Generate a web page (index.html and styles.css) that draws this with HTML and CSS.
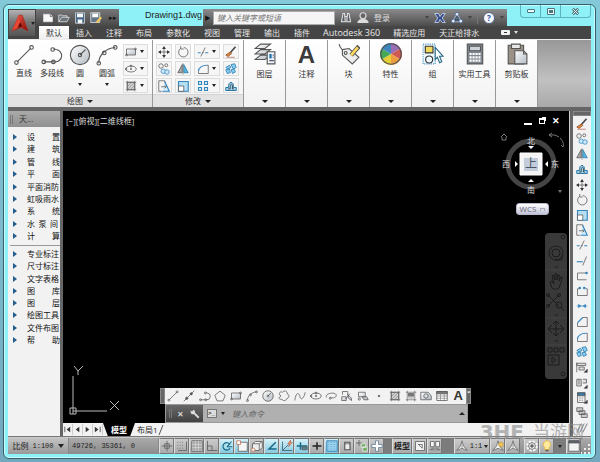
FILE: index.html
```html
<!DOCTYPE html>
<html lang="zh-CN">
<head>
<meta charset="utf-8">
<meta name="viewport" content="width=device-width, initial-scale=1">
<title>Drawing1.dwg</title>
<link rel="stylesheet" href="styles.css">
</head>
<body>
<svg class="sprite" aria-hidden="true">
  <defs>
    <linearGradient id="steel" x1="0" y1="0" x2="1" y2="1"><stop offset="0" stop-color="#fff"/><stop offset="1" stop-color="#b4bcc4"/></linearGradient>
    <linearGradient id="red" x1="0" y1="0" x2="1" y2="1"><stop offset="0" stop-color="#f0604a"/><stop offset="1" stop-color="#8e0b05"/></linearGradient>
  </defs>
  <symbol id="line" viewBox="0 0 16 16"><path d="M3 13 13 3"/><circle cx="2.5" cy="13.500" r="1.300"/><circle cx="13.500" cy="2.500" r="1.300"/></symbol>
  <symbol id="xline" viewBox="0 0 16 16"><path d="M1 15 15 1"/><g fill="#444"><circle cx="5" cy="11" r="1.500"/><circle cx="11" cy="5" r="1.500"/></g></symbol>
  <symbol id="pline" viewBox="0 0 16 16"><path d="M2 13h8a4 4 0 0 0 1-9l-2-.5"/><circle cx="2" cy="13" r="1.300"/><circle cx="9" cy="13" r="1.300"/><circle cx="8.500" cy="4" r="1.300"/></symbol>
  <symbol id="polygon" viewBox="0 0 16 16"><path d="M8 1.500 15 7l-3 7.500H4L1 7z"/></symbol>
  <symbol id="rect" viewBox="0 0 16 16"><path d="M2 4h12v8H2z" fill="url(#steel)"/><circle cx="2" cy="12" r="1.200"/><circle cx="14" cy="4" r="1.200"/></symbol>
  <symbol id="arc" viewBox="0 0 16 16"><path d="M2 14C2 8 7 3 14 2.500"/><circle cx="2" cy="14" r="1.300"/><circle cx="6" cy="6.500" r="1.300"/><circle cx="14" cy="2.500" r="1.300"/></symbol>
  <symbol id="circle" viewBox="0 0 16 16"><circle cx="8" cy="8" r="7" fill="url(#steel)"/><path d="m8 8 4-4"/><circle cx="8" cy="8" r="1.200"/></symbol>
  <symbol id="cloud" viewBox="0 0 16 16"><path d="M4 8C0 6 2 1 6 3c2-3 7-2 6 2 4 1 3 6 0 6-1 4-6 4-7 1-4 2-5-3-1-4z"/></symbol>
  <symbol id="spline" viewBox="0 0 16 16"><path d="M1 14C3 1 7 4 8 9s5 3 7-6"/></symbol>
  <symbol id="ellipse" viewBox="0 0 16 16"><ellipse cx="8" cy="8" rx="7" ry="4"/><circle cx="8" cy="8" r="1"/><circle cx="8" cy="4" r="1.200"/><circle cx="1.500" cy="8" r="1"/></symbol>
  <symbol id="earc" viewBox="0 0 16 16"><path d="M2 10C-1 4 15 2 15 7c0 4-6 4-8 3"/><circle cx="7" cy="11" r="1.300"/></symbol>
  <symbol id="block" viewBox="0 0 16 16"><path d="M2 6V2h7v5" /><path d="M1 9h6v5H1zM9 6l5 5v3l-4-3z" fill="url(#steel)"/><path d="m6 12 6-7"/></symbol>
  <symbol id="make" viewBox="0 0 16 16"><path d="M2 3h9v6H2zM7 9h6l2 4H9z" fill="url(#steel)"/><circle cx="3" cy="12" r="1.500"/></symbol>
  <symbol id="point" viewBox="0 0 16 16"><circle cx="8" cy="8" r="1" fill="#333"/></symbol>
  <symbol id="hatch" viewBox="0 0 16 16"><path d="M3 3h10v10H3z" fill="#cfcfcf"/><path d="M3 1v14M13 1v14M1 3h14M1 13h14" stroke-width=".8"/><path d="m4 8 4-4M4 12l8-8m-4 8 4-4" stroke-width=".5"/></symbol>
  <symbol id="gradient" viewBox="0 0 16 16"><path d="M3 1v14M13 1v14M1 3h14M1 13h14" stroke-width=".8"/><path d="M4 4h8v5H4z" fill="#777" stroke="none"/><path d="M4 9h8v3H4z" fill="#ccc" stroke="none"/></symbol>
  <symbol id="region" viewBox="0 0 16 16"><path d="M1 3h10l4 5v5H1z" fill="url(#steel)"/><circle cx="8" cy="8" r="3"/></symbol>
  <symbol id="table" viewBox="0 0 16 16"><path d="M1 2h14v12H1z" fill="#f8f8f8"/><path d="M1 8h14M1 11h14M6 5v9m5-9v9" stroke-width=".6"/><path d="M1 2h14v3H1z" fill="#777"/></symbol>
  <symbol id="move" viewBox="0 0 16 16"><path d="M8 2v12M2 8h12"/><path d="m8 0 2.500 4h-5zM8 16l2.500-4h-5zM0 8l4-2.500v5zM16 8l-4-2.500v5z" fill="#333" stroke="none"/></symbol>
  <symbol id="rotate" viewBox="0 0 16 16"><path d="M5 3a6.300 6.300 0 1 0 4-1M5 0v4h4"/></symbol>
  <symbol id="trim" viewBox="0 0 16 16"><path d="M1 9h4m6 0h4" stroke="#3484bd" stroke-width="1.500"/><path d="M7 9h2M5 14l6-12"/></symbol>
  <symbol id="extend" viewBox="0 0 16 16"><path d="M1 9h8" stroke="#3484bd" stroke-width="1.500"/><path d="m9 14 5-12"/></symbol>
  <symbol id="brush" viewBox="0 0 16 16"><path d="M14 1 7 9" stroke="#444" stroke-width="2"/><path d="M7 8 1 12l3 2 5-4z" fill="#d8853d" stroke="#94502a"/><path d="M2 15h11" stroke="#b76a58"/></symbol>
  <symbol id="copy" viewBox="0 0 16 16"><circle cx="4" cy="4" r="3"/><circle cx="11" cy="3" r="2"/><g stroke="#3187bd" fill="#cfeafa"><circle cx="7" cy="11" r="3"/><circle cx="12" cy="12" r="3"/></g></symbol>
  <symbol id="mirror" viewBox="0 0 16 16"><path d="M7 2v11H1z" fill="#aaa"/><path d="M9 2v11h6z" fill="#55b5e7" stroke="#2878a8"/><path d="M8 0v16" stroke-width=".6"/></symbol>
  <symbol id="fillet" viewBox="0 0 16 16"><path d="M13 3h2v11H2v-3" /><path d="M2 11C2 6 7 3 13 3" stroke="#3484bd" stroke-width="1.500"/></symbol>
  <symbol id="chamfer" viewBox="0 0 16 16"><path d="M9 2h6v12H2V9"/><path d="m2 9 7-7" stroke="#3484bd" stroke-width="1.500"/></symbol>
  <symbol id="explode" viewBox="0 0 16 16"><path d="m1 6 5-3 2 3-4 2zM8 2l5-1 2 5-4 2zM1 9l5-1 1 5-4 1zM8 9l4-1 2 4-4 2z" fill="#86cff2" stroke="#2576a9"/></symbol>
  <symbol id="stretch" viewBox="0 0 16 16"><path d="M9 5V1H1v14h4"/><path d="m9 2 6 13H6" stroke="#3484bd" stroke-width="1.500" fill="#d2edfb"/><path d="M4 9h7M9 7l2 2-2 2"/></symbol>
  <symbol id="scale" viewBox="0 0 16 16"><path d="M2 2h13v13H2z" fill="#b4def2" stroke="#3484bd" stroke-width="1.500"/><path d="M2 8h7v7H2z" fill="#fff"/></symbol>
  <symbol id="array" viewBox="0 0 16 16"><g fill="#d9effa" stroke="#3187bd" stroke-width="1.500"><path d="M2 2h4v4H2zM10 2h4v4h-4zM2 10h4v4H2zM10 10h4v4h-4z"/></g></symbol>
  <symbol id="offset" viewBox="0 0 16 16"><path d="M1 14v-4h4C3 1 13 1 11 10h4v4z" fill="#9fd2ec" stroke="#2876a2" stroke-width="1.300"/><path d="M4 12h3V8c0-3 3-3 3 0v4h2" stroke="#333"/></symbol>
  <symbol id="break1" viewBox="0 0 16 16"><path d="M13 4H2v9h12"/><circle cx="14" cy="4" r="1.800" fill="#3484bd" stroke="none"/></symbol>
  <symbol id="break2" viewBox="0 0 16 16"><path d="M4 5H2v9h13V5h-2"/><g fill="#3484bd" stroke="none"><circle cx="5" cy="4" r="1.800"/><circle cx="11" cy="4" r="1.800"/></g></symbol>
  <symbol id="join" viewBox="0 0 16 16"><path d="M1 8h14" stroke="#3484bd"/><path d="m3 5 4 3-4 3zM13 5 9 8l4 3z" fill="#3484bd" stroke="none"/></symbol>
  <symbol id="order" viewBox="0 0 16 16"><path d="M1 2v13M1 3h12v3H1zM4 8h7v4H4z" fill="#ddd"/><path d="M15 11v4h-4z" fill="#222"/></symbol>
  <symbol id="align" viewBox="0 0 16 16"><path d="M1 3h6v9H1zM9 3h5v5H9M4 3v7" fill="#ddd"/><path d="M15 11v4h-4z" fill="#222"/></symbol>
  <symbol id="calcblue" viewBox="0 0 16 16"><path d="M2 1h10v13H2z" fill="#eee"/><path d="M2 1h10v4H2z" fill="#3c78a5"/><path d="M4 8h6M4 11h6" stroke-dasharray="1 1"/><path d="M15 11v4h-4z" fill="#222"/></symbol>
  <symbol id="stack" viewBox="0 0 16 16"><path d="M1 1h8v5H1zM4 5h8v5H4zM7 9h8v5H7z" fill="#ccc"/></symbol>
  <symbol id="slashes" viewBox="0 0 16 16"><path d="m1 14 6-12M5 14l6-12M9 14l6-12"/></symbol>
  <symbol id="a-logo" viewBox="0 0 16 16"><path d="M1 15 7 1h3l5 14-6-3z" fill="url(#red)" stroke="#a81d10" stroke-width=".5"/><path d="m8 7 2 4-4 1z" fill="#5e0804" stroke="none"/><path d="m1 15 6-14 1 6-2 5z" fill="#e64835" stroke="none"/></symbol>
  <symbol id="new" viewBox="0 0 16 16"><path d="M2 3h9l3 3v7H2z" fill="#f8f8f8" stroke="#ddd"/><path d="M11 3v3h3"/></symbol>
  <symbol id="open" viewBox="0 0 16 16"><path d="M1 13V4h4l1 1h6v3M1 13l4-6h10l-3 6z" fill="#6c747c" stroke="#e6e6e6"/></symbol>
  <symbol id="save" viewBox="0 0 16 16"><path d="M2 1h12v14H2z" fill="#46698c" stroke="#ddd"/><path d="M4 2h8v5H4zM5 10h6v5H5z" fill="#f8f8f8" stroke="none"/></symbol>
  <symbol id="saveas" viewBox="0 0 16 16"><path d="M1 1h12v13H1z" fill="#65788a" stroke="#eee"/><path d="M3 2h8v5H3z" fill="#fff" stroke="none"/><path d="m15 7-6 7" stroke="#f0c65d" stroke-width="3"/></symbol>
  <symbol id="binocular" viewBox="0 0 16 16"><path d="M4 2h2l1 11H2zM10 2h2l2 11H9zM6 6h4" fill="#555d66" stroke="#e4e4e4" stroke-width="1.400"/></symbol>
  <symbol id="user" viewBox="0 0 16 16"><circle cx="8" cy="5" r="4" fill="#666" stroke="#ddd" stroke-width="1.500"/><path d="M1 14c1-4 4-4 7-4s6 0 7 4z" fill="#ddd" stroke="#eee"/></symbol>
  <symbol id="exchange" viewBox="0 0 16 16"><path d="M1 2h5l2 4 3-4h4l-4 6 4 6h-4l-3-4-2 4H1l4-6z" fill="#354f8c" stroke="#dde6ff"/></symbol>
  <symbol id="a360" viewBox="0 0 16 16"><path d="m8 2-6 11h12zM8 8v1" fill="#456" stroke="#ccd8f0"/><g fill="#e3eaff" stroke="#48608f"><circle cx="8" cy="3" r="2.500"/><circle cx="3" cy="12" r="2.500"/><circle cx="13" cy="12" r="2.500"/></g></symbol>
  <symbol id="layers" viewBox="0 0 20 20"><path d="M6 1h9l-5 4H1zM6 6h9l-5 4H1zM6 11h9l-5 4H1z" fill="url(#steel)"/><path d="M12 8h7v11h-7z" fill="#eef4fa"/><path d="M14 10h2v4h-2z" fill="#166ba8" stroke="none"/><path d="M17 11h1m-1 2h1m-4 3h4" stroke="#557"/></symbol>
  <symbol id="tag" viewBox="0 0 20 20"><path d="M1 1c1 4 4 7 6 6" /><path d="m4 6 6-1 9 8-6 6-9-8z" fill="#eceeee"/><circle cx="7" cy="9" r="1.300"/><path d="m19 3-7 8" stroke="#555" stroke-width="4"/><path d="m18 4-6 7" stroke="#ffd85b" stroke-width="2.500"/></symbol>
  <symbol id="wheel" viewBox="0 0 20 20"><g stroke="none"><path d="M10 10V0a10 10 0 0 1 8.700 5z" fill="#9a6eb5"/><path d="m10 10 8.700-5a10 10 0 0 1 0 10z" fill="#cf5a51"/><path d="m10 10 8.700 5A10 10 0 0 1 10 20z" fill="#ee9c40"/><path d="M10 10v10a10 10 0 0 1-8.700-5z" fill="#e6cd37"/><path d="m10 10-8.700 5a10 10 0 0 1 0-10z" fill="#45a957"/><path d="M10 10 1.300 5A10 10 0 0 1 10 0z" fill="#3e87bd"/></g><circle cx="10" cy="10" r="9.300" stroke="#555"/></symbol>
  <symbol id="group" viewBox="0 0 20 20"><path d="M1 1h11v18H1z" fill="#eff8fc" stroke="#4892c3" stroke-dasharray="1 1"/><path d="M3 3h7v6H3z" fill="#f3d95c" stroke="#333"/><circle cx="6.500" cy="15" r="3.200" stroke="#333"/><path d="m12 4 7 8h-3l2 5-2 1-2-5-2 2z" fill="#fff" stroke="#276787"/></symbol>
  <symbol id="calc" viewBox="0 0 20 20"><path d="M3 1h14v18H3z" fill="#7f8790"/><path d="M5 3h10v4H5z" fill="#cdd4d9"/><path d="M5 10h10M5 13h10M5 16h10" stroke="#fff" stroke-width="2" stroke-dasharray="2 .7"/></symbol>
  <symbol id="paste" viewBox="0 0 20 20"><path d="M2 2h14v17H2z" fill="#9b9187"/><path d="M5 1h8v4H5z" fill="#e9e9e9"/><path d="M8 7h8l3 3v9H8z" fill="url(#steel)"/><path d="M16 7v3h3"/></symbol>
  <symbol id="snap" viewBox="0 0 16 16"><path d="M8 1v14M1 8h14M5 5h6v6H5z"/></symbol>
  <symbol id="dots" viewBox="0 0 16 16"><path d="M2 3h9M2 7h9M2 11h9" stroke-dasharray="1 2"/><path d="M14 2v12H3"/></symbol>
  <symbol id="grid" viewBox="0 0 16 16"><path d="M1 1h14v14H1z" fill="#e4e4e4"/><path d="M4 1v14M8 1v14m4-14v14M1 4h14M1 8h14M1 12h14" stroke-width=".6"/></symbol>
  <symbol id="ortho" viewBox="0 0 16 16"><path d="M2 1v13h13M2 8h6v6"/></symbol>
  <symbol id="polar" viewBox="0 0 16 16"><path d="M12 6a5 5 0 1 0 0 5" stroke="#126783" stroke-width="1.500"/><path d="M8 9h7m-7 0 6-7" stroke="#126783" stroke-width="1.500"/></symbol>
  <symbol id="osnap" viewBox="0 0 16 16"><path d="M3 3h12v12H3z" fill="#f5f5f5"/><path d="M1 1h5v5H1z" fill="#fff" stroke="#c56b47"/></symbol>
  <symbol id="osnap3" viewBox="0 0 16 16"><path d="m2 5 4-3h9v8l-4 4H2zM2 5h9v9m0-9 4-3" fill="#eee"/><circle cx="3" cy="13" r="2.200" fill="#fff" stroke="#c56b47"/></symbol>
  <symbol id="angle" viewBox="0 0 16 16"><path d="M13 3 4 12h10" stroke="#176b88" stroke-width="2"/></symbol>
  <symbol id="ducs" viewBox="0 0 16 16"><path d="M2 2v12h13M2 14l8-8" stroke="#32556b"/><path d="m13 0-4 5h3l-2 4 5-6h-3z" fill="#f5a92f" stroke="#b66"/></symbol>
  <symbol id="dyn" viewBox="0 0 16 16"><path d="M6 3v10M1 8h14" stroke="#176b88" stroke-width="2"/><path d="M8 9h7v4H8z" fill="#5c8291"/></symbol>
  <symbol id="weight" viewBox="0 0 16 16"><path d="M2 8h12M8 3v10" stroke="#222" stroke-width="2"/></symbol>
  <symbol id="trans" viewBox="0 0 16 16"><path d="M1 1h14v14H1z" fill="#9dd5f0" stroke="#216fa7"/><path d="M1 3h14M1 6h14M1 9h14M1 12h14" stroke="#4f9ac6" stroke-dasharray="1 1"/></symbol>
  <symbol id="quick" viewBox="0 0 16 16"><path d="M5 3h7v10H5z" fill="#eee" stroke-width="1.500"/><path d="M5 5h7"/></symbol>
  <symbol id="cycle" viewBox="0 0 16 16"><path d="M4 0v8M0 4h8"/><path d="M7 5h6v5H7zM9 9h6v6H9z" fill="#74ad64" stroke="#eee"/></symbol>
  <symbol id="plus" viewBox="0 0 16 16"><path d="M6 1h4v5h5v4h-5v5H6v-5H1V6h5z" fill="#fff" stroke="#597993"/></symbol>
  <symbol id="sheet" viewBox="0 0 16 16"><path d="M2 2h12v12H2z" fill="#f2f2f2"/><path d="m5 5 6 6V6H6"/></symbol>
  <symbol id="views" viewBox="0 0 16 16"><path d="M2 2h5v7H2zM9 2h5v7H9zM1 13h14M4 13v-2h8v2" fill="#f8f8f8"/></symbol>
  <symbol id="scaleA" viewBox="0 0 16 16"><path d="m8 1 2 7 5 6-7-3-7 3 5-6z" fill="#f2f2f2" stroke="#666"/><path d="M8 2v9" stroke="#888"/></symbol>
  <symbol id="scaleAy" viewBox="0 0 16 16"><path d="m8 1 2 7 5 6-7-3-7 3 5-6z" fill="#f2f2f2" stroke="#666"/><circle cx="12" cy="6" r="3" fill="#f4c75c" stroke="#c89b3c"/></symbol>
  <symbol id="gear" viewBox="0 0 16 16"><circle cx="8" cy="8" r="6" stroke="#fff" stroke-width="3" stroke-dasharray="3 1.700"/><circle cx="8" cy="8" r="4.500" fill="#eee"/><circle cx="8" cy="8" r="1.800" fill="#777"/></symbol>
  <symbol id="bulb" viewBox="0 0 16 16"><path d="M5 10c-4-4-1-9 3-9s7 5 3 9v3H5z" fill="#ffe99b" stroke="#e7ad37"/><path d="M6 14h4" stroke-width="2"/></symbol>
  <symbol id="screen" viewBox="0 0 16 16"><path d="M1 1h14v14H1z" fill="#f4f4f4"/><path d="M1 1h14v3H1z" fill="#5d6674"/></symbol>
  <symbol id="wrench" viewBox="0 0 16 16"><path d="M14 14 5 5" stroke="#ddd" stroke-width="3"/><path d="M6 1 3 4 1 2c-1 6 3 8 6 5 2-2 1-5-1-6z" fill="#ddd" stroke="none"/></symbol>
</svg>

<div class="window">
  <header class="titlebar">
    <button class="appbtn" aria-label="应用程序菜单"><svg class="logo"><use href="#a-logo"/></svg><span class="tri"></span></button>
    <div class="quick">
      <button aria-label="新建"><svg><use href="#new"/></svg></button><button aria-label="打开"><svg><use href="#open"/></svg></button><button aria-label="保存"><svg><use href="#save"/></svg></button><button aria-label="另存为"><svg><use href="#saveas"/></svg></button><button class="more">▸▸</button>
    </div>
    <div class="doc">Drawing1.dwg</div>
    <div class="info">
      <span class="next">▶</span>
      <input class="search" aria-label="搜索" placeholder="键入关键字或短语">
      <svg><use href="#binocular"/></svg>
      <svg><use href="#user"/></svg>
      <button class="login">登录</button>
      <span class="grow"></span>
      <span class="tri dim"></span><svg><use href="#exchange"/></svg><svg><use href="#a360"/></svg><span class="tri dim"></span><span class="rule"></span><button class="help">?</button><span class="tri dim"></span>
    </div>
    <div class="winctl"><button aria-label="最小化"><i class="wmin"></i></button><button aria-label="还原"><i class="wmax"></i></button><button class="wclose" aria-label="关闭"><svg viewBox="0 0 10 10"><path d="m2 2 6 6M8 2 2 8" stroke="#51727b" stroke-width="3"/><path d="m2 2 6 6M8 2 2 8" stroke="#e8ffff"/></svg></button></div>
  </header>
  <nav class="tabs">
    <a href="#" class="on">默认</a><a href="#">插入</a><a href="#">注释</a><a href="#">布局</a><a href="#">参数化</a><a href="#">视图</a><a href="#">管理</a><a href="#">输出</a><a href="#">插件</a><a href="#" class="latin">Autodesk 360</a><a href="#">精选应用</a><a href="#">天正给排水</a>
    <button class="ribmin" aria-label="最小化功能区"><i></i></button><span class="tri light"></span>
  </nav>

  <section class="ribbon">
    <div class="panel draw">
      <div class="tools">
        <button class="big"><svg><use href="#line"/></svg>直线</button>
        <button class="big"><svg><use href="#pline"/></svg>多段线</button>
        <button class="big"><svg><use href="#circle"/></svg>圆<i class="tri"></i></button>
        <button class="big"><svg><use href="#arc"/></svg>圆弧<i class="tri"></i></button>
        <div class="smalls one">
          <button class="split" aria-label="矩形"><svg><use href="#rect"/></svg><i class="tri"></i></button>
          <button class="split" aria-label="椭圆"><svg><use href="#ellipse"/></svg><i class="tri"></i></button>
          <button class="split" aria-label="图案填充"><svg><use href="#hatch"/></svg><i class="tri"></i></button>
        </div>
      </div>
      <div class="ptitle">绘图 <i class="tri"></i></div>
    </div>
    <div class="panel modify">
      <div class="tools">
        <div class="smalls four">
          <button aria-label="移动"><svg><use href="#move"/></svg></button><button aria-label="旋转"><svg><use href="#rotate"/></svg></button><button class="split" aria-label="修剪"><svg><use href="#trim"/></svg><i class="tri"></i></button><button aria-label="删除"><svg><use href="#brush"/></svg></button>
          <button aria-label="复制"><svg><use href="#copy"/></svg></button><button aria-label="镜像"><svg><use href="#mirror"/></svg></button><button class="split" aria-label="圆角"><svg><use href="#fillet"/></svg><i class="tri"></i></button><button aria-label="分解"><svg><use href="#explode"/></svg></button>
          <button aria-label="拉伸"><svg><use href="#stretch"/></svg></button><button aria-label="缩放"><svg><use href="#scale"/></svg></button><button class="split" aria-label="阵列"><svg><use href="#array"/></svg><i class="tri"></i></button><button aria-label="偏移"><svg><use href="#offset"/></svg></button>
        </div>
      </div>
      <div class="ptitle">修改 <i class="tri"></i></div>
    </div>
    <button class="panel solo"><svg><use href="#layers"/></svg>图层<i class="tri"></i></button>
    <button class="panel solo"><b class="bigA">A</b>注释<i class="tri"></i></button>
    <button class="panel solo"><svg><use href="#tag"/></svg>块<i class="tri"></i></button>
    <button class="panel solo"><svg><use href="#wheel"/></svg>特性<i class="tri"></i></button>
    <button class="panel solo"><svg><use href="#group"/></svg>组<i class="tri"></i></button>
    <button class="panel solo"><svg><use href="#calc"/></svg>实用工具<i class="tri"></i></button>
    <button class="panel solo"><svg><use href="#paste"/></svg>剪贴板<i class="tri"></i></button>
  </section>

  <main class="work">
    <aside class="side">
      <div class="sidehead"><i class="grip"></i>天...</div>
      <ul class="first">
        <li><span>设</span><span>置</span></li><li><span>建</span><span>筑</span></li><li><span>管</span><span>线</span></li><li><span>平</span><span>面</span></li><li>平面消防</li><li>虹吸雨水</li><li><span>系</span><span>统</span></li><li class="near"><span>水</span><span>泵</span><span>间</span></li><li><span>计</span><span>算</span></li>
      </ul>
      <ul class="second">
        <li>专业标注</li><li>尺寸标注</li><li>文字表格</li><li><span>图</span><span>库</span></li><li><span>图</span><span>层</span></li><li>绘图工具</li><li>文件布图</li><li><span>帮</span><span>助</span></li>
      </ul>
    </aside>

    <section class="drawing">
      <div class="canvas">
        <div class="vplabel">[−][俯视][二维线框]</div>
        <div class="vpctl"><button aria-label="最小化"><i class="wmin"></i></button><button aria-label="还原"><i class="wrest"></i></button><button aria-label="关闭">✕</button></div>
        <div class="cube">
          <svg class="ring" viewBox="0 0 68 66">
            <circle cx="33" cy="33" r="23" stroke="#444" stroke-width="5"/>
            <path d="M22 22h22v22H22z" fill="#f4f4f4" stroke="#fff"/><path d="M26 27h14v13H26z" fill="#c3ccdb" stroke="none"/>
            <path d="m30 15h6l-3 3zM30 51h6l-3-3zM17 30v6l3-3zM50 30v6l-3-3z" fill="#fff" stroke="none"/>
            <path d="m51 4h6l4 2M51 4l3-2m-3 2 3 2M62 7c3 3 4 6 3 9l-2-2" stroke="#777"/><path d="M60 59h4l-2 3z" fill="#777" stroke="none"/>
            <path d="m3 6 3-3 3 3M4 6v3h4V6" stroke="#777"/>
          </svg>
          <span class="n">北</span><span class="w">西</span><span class="e">东</span><span class="s">南</span><span class="up">上</span>
        </div>
        <button class="wcs">WCS <i></i></button>
        <svg class="navbar" viewBox="0 0 22 146">
          <path d="M0 4q0-4 4-4h14q4 0 4 4v138q0 4-4 4H4q-4 0-4-4z" fill="#393939" stroke="none"/>
          <g stroke="#1c1c1c" fill="none"><path d="M0 37h22M0 85h22M0 112h22" stroke="#444"/><circle cx="18" cy="4" r="2"/><circle cx="18" cy="141" r="2"/><circle cx="11" cy="20" r="7"/><circle cx="11" cy="20" r="4"/><path d="M17 21v6h-7M10 34h3M10 82h3M10 108h3"/>
          <path d="m5 49 2-1 2 3-2-8q1-2 2 0l1 4v-6q2-1 2 0v6l1-5q2 0 2 1l-1 5 2-4q2 0 1 2l-3 9q-4 3-7 0z"/><path d="m3 62 11 11M14 62 3 73"/><circle cx="3" cy="62" r="1.500"/><circle cx="14" cy="62" r="1.500"/><circle cx="3" cy="73" r="1.500"/><circle cx="14" cy="72" r="3"/><path d="m16 74 3 4"/>
          <path d="M11 88v15M4 96h14M7 92l-4 4 4 4M15 92l4 4-4 4M8 91l3-3 3 3M8 100l3 3 3-3"/><path d="M3 115h4v4H3zM9 115h4v4H9zM15 115h4v4h-4zM3 122h11v10H3zM7 124v6l4-3z"/></g>
        </svg>
        <svg class="ucs" viewBox="0 0 52 54"><path d="M5 49V11M5 46h34M2 43h6v6H2zM6 1l4 5 5-5M10 6v4M42 36l9 9M51 36l-9 9" stroke="#bbb"/></svg>
        <div class="dock">
          <div class="drawbar">
            <i class="barend"></i>
            <button aria-label="直线"><svg><use href="#line"/></svg></button><button aria-label="构造线"><svg><use href="#xline"/></svg></button><button aria-label="多段线"><svg><use href="#pline"/></svg></button><button aria-label="多边形"><svg><use href="#polygon"/></svg></button><button aria-label="矩形"><svg><use href="#rect"/></svg></button><button aria-label="圆弧"><svg><use href="#arc"/></svg></button><button aria-label="圆"><svg><use href="#circle"/></svg></button><button aria-label="修订云线"><svg><use href="#cloud"/></svg></button><button aria-label="样条曲线"><svg><use href="#spline"/></svg></button><button aria-label="椭圆"><svg><use href="#ellipse"/></svg></button><button aria-label="椭圆弧"><svg><use href="#earc"/></svg></button><button aria-label="插入块"><svg><use href="#block"/></svg></button><button aria-label="创建块"><svg><use href="#make"/></svg></button><button aria-label="点"><svg><use href="#point"/></svg></button><button aria-label="图案填充"><svg><use href="#hatch"/></svg></button><button aria-label="渐变色"><svg><use href="#gradient"/></svg></button><button aria-label="面域"><svg><use href="#region"/></svg></button><button aria-label="表格"><svg><use href="#table"/></svg></button><button class="txtA">A</button>
            <i class="barend x">×</i>
          </div>
          <div class="cmd">
            <div class="cmdctl"><i class="grip"></i><button aria-label="关闭">✕</button><button aria-label="自定义"><svg><use href="#wrench"/></svg></button></div>
            <span class="prompt">&gt;_</span><i class="tri"></i>
            <input aria-label="命令" placeholder="键入命令">
            <i class="tri upward"></i>
          </div>
        </div>
      </div>
      <div class="layouts">
        <button aria-label="第一个"><svg viewBox="0 0 10 10"><path d="M2 2v6"/><path d="M8 2v6L4 5z" fill="#333" stroke="none"/></svg></button><button aria-label="上一个"><svg viewBox="0 0 10 10"><path d="M7 2v6L3 5z" fill="#333" stroke="none"/></svg></button><button aria-label="下一个"><svg viewBox="0 0 10 10"><path d="M3 2v6l4-3z" fill="#333" stroke="none"/></svg></button><button aria-label="最后一个"><svg viewBox="0 0 10 10"><path d="M8 2v6"/><path d="M2 2v6l4-3z" fill="#333" stroke="none"/></svg></button>
        <a href="#" class="model">模型</a><a href="#" class="sheet">布局1</a>
        <svg class="edge" viewBox="0 0 6 12"><path d="M1 11 5 1"/></svg>
      </div>
    </section>

    <aside class="rightbar">
      <i class="barend"></i>
      <button><svg><use href="#brush"/></svg></button><button><svg><use href="#copy"/></svg></button><button><svg><use href="#mirror"/></svg></button><button><svg><use href="#offset"/></svg></button><button><svg><use href="#move"/></svg></button><button><svg><use href="#rotate"/></svg></button><button><svg><use href="#scale"/></svg></button><button><svg><use href="#stretch"/></svg></button><button><svg><use href="#trim"/></svg></button><button><svg><use href="#extend"/></svg></button><button><svg><use href="#break1"/></svg></button><button><svg><use href="#break2"/></svg></button><button><svg><use href="#join"/></svg></button><button><svg><use href="#chamfer"/></svg></button><button><svg><use href="#fillet"/></svg></button><button><svg><use href="#explode"/></svg></button><button><svg><use href="#order"/></svg></button><button><svg><use href="#align"/></svg></button><button><svg><use href="#calcblue"/></svg></button><button><svg><use href="#stack"/></svg></button><button><svg><use href="#slashes"/></svg></button>
    </aside>
  </main>

  <footer class="status">
    <button class="ratio">比例 <span class="mono">1:100</span> <i class="tri"></i></button>
    <div class="coords mono">49726, 35361, 0</div>
    <div class="toggles">
      <button><svg><use href="#snap"/></svg></button><button><svg><use href="#dots"/></svg></button><button><svg><use href="#grid"/></svg></button><button><svg><use href="#ortho"/></svg></button><button class="on"><svg><use href="#polar"/></svg></button><button class="on"><svg><use href="#osnap"/></svg></button><button><svg><use href="#osnap3"/></svg></button><button class="on"><svg><use href="#angle"/></svg></button><button class="on"><svg><use href="#ducs"/></svg></button><button class="on"><svg><use href="#dyn"/></svg></button><button><svg><use href="#weight"/></svg></button><button class="on"><svg><use href="#trans"/></svg></button><button><svg><use href="#quick"/></svg></button><button><svg><use href="#cycle"/></svg></button><button><svg><use href="#plus"/></svg></button>
    </div>
    <span class="sep grow"></span>
    <div class="toggles right">
      <button class="wide">模型</button><button><svg><use href="#sheet"/></svg></button><button><svg><use href="#views"/></svg></button><span class="sep"></span><button class="anno"><svg><use href="#scaleA"/></svg><span class="mono">1:1</span><i class="tri"></i></button><button><svg><use href="#scaleAy"/></svg></button><button><svg><use href="#scaleA"/></svg></button><span class="gap"></span><button><svg><use href="#gear"/></svg></button><button><svg><use href="#bulb"/></svg></button><span class="sep"><i class="tri"></i></span><button><svg><use href="#screen"/></svg></button><svg class="corner" viewBox="0 0 10 10"><path d="M8 0v2M8 4v2M8 8v2M4 4v2M4 8v2M0 8v2" stroke="#eee" stroke-width="2"/></svg>
    </div>
  </footer>
  <div class="mark"><b>3HE</b><span>当游网</span></div>
</div>
</body>
</html>
```
FILE: styles.css
```css
* { box-sizing: border-box; }
html, body { height: 100%; }
body {
  margin: 0;
  padding: 4px 4px 3px 3px;
  background: linear-gradient(#83c9d8, #73a8be);
  font: 8px/12px "Open Sans", "Noto Sans CJK SC", sans-serif;
  color: #333;
  overflow: hidden;
}
button, input { font: inherit; color: inherit; margin: 0; padding: 0; border: 0; background: none; }
button { display: flex; align-items: center; justify-content: center; white-space: nowrap; }
a { color: inherit; text-decoration: none; }
ul { list-style: none; margin: 0; padding: 0; }
svg { display: block; width: 12px; height: 12px; fill: none; stroke: #555; stroke-width: 1; flex: none; }
.sprite { position: absolute; width: 0; height: 0; }
.grow { flex: 1; }
.mono { font-family: "Liberation Mono", monospace; }
.tri { width: 0; height: 0; border: 2px solid transparent; border-top: 3px solid #222; border-bottom: 0; flex: none; }
.tri.light { border-top-color: #ddd; }
.tri.dim { border-top-color: #444; }
.tri.upward { border-top: 0; border-bottom: 3px solid #222; border-left-width: 3px; border-right-width: 3px; }
.grip { width: 3px; height: 9px; border-left: 1px solid #777; border-right: 1px solid #777; }

.window {
  position: relative;
  height: 100%;
  display: flex;
  flex-direction: column;
  padding: 4px;
  border: 1px solid #34606c;
  border-radius: 6px;
  background: #8ff1f8;
  box-shadow: inset 0 0 0 1px #c7fbff;
}

.titlebar { display: flex; height: 17px; flex: none; position: relative; z-index: 1; }
.appbtn { width: 28px; height: 28px; gap: 2px; padding-left: 1px; background: linear-gradient(#b4b4b4, #777 45%, #555); border: 1px solid #444; flex: none; }
.appbtn .logo { width: 18px; height: 20px; }
.quick { width: 83px; display: flex; align-items: center; padding-left: 6px; gap: 4px; background: linear-gradient(#777, #484848); flex: none; }
.quick .more { color: #111; font-size: 7px; margin-left: 3px; }
.doc { flex: 1 1 84px; max-width: 84px; padding-left: 26px; font: 9px/12px "Liberation Sans", sans-serif; color: #222; white-space: nowrap; }
.info { flex: 1; display: flex; align-items: center; gap: 5px; padding-right: 3px; background: linear-gradient(#8b8b8b, #4c4c4c); }
.info svg { width: 12px; height: 12px; }
.next { width: 9px; margin-right: -4px; font-size: 6px; color: #111; text-align: center; }
.search { flex: 1 1 122px; min-width: 60px; max-width: 122px; height: 14px; padding: 0 3px; background: #f5f5f5; border: 1px solid #aaa; border-radius: 0; font-style: italic; }
.search::placeholder { color: #777; opacity: 1; }
.login { color: #ddd; }
.rule { width: 1px; height: 12px; background: #777; }
.help { width: 12px; height: 12px; border-radius: 6px; background: #f6f8ff; border: 1px solid #55617f; color: #234a99; font-weight: bold; }
.winctl { display: flex; width: 71px; height: 13px; margin: -4px 0 0 13px; border: 1px solid #5ab3bd; border-top: 0; border-radius: 0 0 4px 4px; flex: none; }
.winctl button { flex: 2; border-right: 1px solid #5ab3bd; }
.winctl .wclose { flex: 3; border: 0; }
.wclose svg { width: 9px; height: 9px; }
.wmin { width: 8px; height: 4px; border: 1px solid #51727b; border-radius: 1px; background: #e8ffff; }
.wmax { width: 8px; height: 7px; border: 1px solid #51727b; border-radius: 1px; background: #51727b; box-shadow: inset 0 0 0 1px #e8ffff; }

.tabs { display: flex; align-items: stretch; height: 13px; padding-left: 31px; background: #454545; color: #e8e8e8; flex: none; }
.tabs a { padding: 0 7px; line-height: 13px; white-space: nowrap; }
.tabs .on { background: linear-gradient(#fff, #eee); color: #333; }
.tabs .latin { font-size: 9px; padding: 0 6px; }
.tabs .tri { align-self: center; }
.ribmin { width: 9px; height: 5px; margin: 4px 4px 0 15px; background: #f2f2f2; border-radius: 1px; }
.ribmin i { width: 3px; height: 1px; background: #333; }

.ribbon { display: flex; height: 68px; flex: none; border-top: 1px solid #eee; background: linear-gradient(#989898, #c1c1c1 60%, #a9a9a9); }
.panel { display: flex; flex-direction: column; flex: none; background: linear-gradient(#fff, #f2f2f2); border-right: 1px solid #999; }
.draw { width: 145px; }
.modify { width: 91px; }
.tools { flex: 1; display: flex; justify-content: space-between; padding: 4px 4px 0 5px; }
.modify .tools { padding: 4px 5px 0 3px; }
.big { flex-direction: column; justify-content: flex-start; line-height: 14px; }
.big svg { width: 22px; height: 22px; stroke-width: .8; }
.big .tri, .solo .tri { margin-top: 3px; }
.ptitle { height: 13px; display: flex; align-items: center; justify-content: center; gap: 4px; background: #e3e3e3; border-top: 1px solid #d3d3d3; }
.ptitle .tri { border-left-width: 3px; border-right-width: 3px; }
.smalls { display: grid; gap: 2px; align-content: start; }
.smalls.four { grid-template-columns: 16px 16px 26px 16px; column-gap: 3px; flex: 1; justify-content: space-between; }
.smalls button { height: 15px; min-width: 16px; border: 1px solid #ddd; background: #f6f6f6; }
.split { gap: 3px; padding: 0 3px 0 1px; }
.smalls .split { min-width: 25px; }
.solo { width: 42px; padding: 3px 0 4px; justify-content: flex-start; line-height: 14px; }
.solo svg, .bigA { width: 22px; height: 22px; margin-bottom: 2px; flex: none; }
.bigA { font: bold 24px/24px "Liberation Sans", sans-serif; text-align: center; color: #3c3c3c; }
.solo .tri { margin-top: auto; border-left-width: 3px; border-right-width: 3px; }

.work { flex: 1; min-height: 0; display: flex; gap: 3px; padding-top: 4px; background: #666; border-bottom: 1px solid #777; }
.side { width: 52px; flex: none; background: #f2f2f2; overflow: hidden; }
.sidehead { display: flex; align-items: center; gap: 6px; height: 16px; padding-left: 2px; background: linear-gradient(#aaa, #909090); }
.side ul { display: flex; flex-direction: column; justify-content: space-between; }
.side .first { height: 118px; padding: 4px 0 3px; }
.side .second { height: 101px; margin-left: 2px; border-top: 1px solid #999; padding-top: 2px; }
.side li { display: flex; justify-content: space-between; line-height: 12px; padding-left: 19px; white-space: nowrap; position: relative; color: #111; }
.side .near { padding-right: 2px; }
.side li::before { content: ""; position: absolute; left: 5px; top: 3px; border: 3px solid transparent; border-left: 4px solid #245c8c; border-right: 0; }
.side .second li { padding-left: 17px; }
.side .second li::before { left: 3px; }

.drawing { flex: 1; min-width: 0; display: flex; flex-direction: column; border-right: 1px solid #ccc; }
.canvas { flex: 1; min-height: 0; position: relative; background: #000; color: #ddd; }
.vplabel { padding: 4px 3px; line-height: 12px; }
.vpctl { position: absolute; right: 9px; top: 5px; display: flex; gap: 6px; color: #fff; font-weight: bold; font-size: 9px; }
.vpctl button { width: 8px; height: 10px; }
.vpctl .wmin { height: 2px; border: 0; background: #fff; margin-top: 5px; border-radius: 0; }
.wrest { width: 6px; height: 6px; border: 1px solid #fff; border-top-width: 2px; box-shadow: 2px -2px 0 -1px #fff; }
.cube { position: absolute; right: 3px; top: 20px; width: 68px; height: 66px; line-height: 10px; }
.ring { width: 68px; height: 66px; }
.cube span { position: absolute; }
.n { left: 29px; top: 5px; } .w { left: 4px; top: 28px; } .e { left: 53px; top: 28px; } .s { left: 29px; top: 54px; }
.cube .up { left: 27px; top: 27px; font-size: 12px; line-height: 12px; color: #4b5566; }
.wcs { position: absolute; right: 20px; top: 92px; width: 33px; height: 12px; border-radius: 3px; background: linear-gradient(#fff, #c3c4d8); color: #667; gap: 4px; border: 1px solid #b9b9ce; }
.wcs i { width: 5px; height: 3px; border: 1px solid #aab; border-bottom: 0; }
.navbar { position: absolute; right: 2px; top: 122px; width: 22px; height: 146px; }
.ucs { position: absolute; left: 5px; bottom: 4px; width: 52px; height: 54px; }

.dock { position: absolute; left: 97px; bottom: 0; width: 311px; color: #333; }
.drawbar { display: flex; align-items: center; height: 16px; background: #f2f2f2; }
.drawbar button { flex: 1; height: 16px; }
.barend { width: 5px; height: 16px; background: #666; border: 1px solid #888; flex: none; }
.barend.x { color: #fff; font: bold 6px/6px "Open Sans", sans-serif; }
.drawbar .txtA { font: bold 13px/16px "Liberation Sans", sans-serif; }
.cmd { display: flex; align-items: center; gap: 4px; height: 19px; margin: 0 3px 0 5px; padding-right: 2px; background: #b0b0b0; border: 1px solid #999; }
.cmdctl { display: flex; align-items: center; justify-content: space-around; width: 37px; height: 17px; background: linear-gradient(#686868, #424242); color: #eee; }
.cmdctl svg { width: 10px; height: 10px; }
.prompt { width: 10px; height: 9px; background: #ddd; border: 1px solid #777; font: bold 6px/7px "Liberation Mono", monospace; }
.cmd input { flex: 1; min-width: 0; height: 17px; padding-left: 3px; }
.cmd input::placeholder { color: #666; opacity: 1; font-style: italic; }

.layouts { display: flex; align-items: center; height: 13px; background: #f2f2f2; flex: none; }
.layouts button { width: 10px; height: 11px; border-right: 1px solid #ccc; }
.layouts button svg { width: 9px; height: 9px; }
.layouts a { line-height: 13px; }
.layouts .model { width: 32px; text-align: center; background: #000; color: #fff; clip-path: polygon(0 0, 100% 0, 85% 100%, 15% 100%); font-weight: bold; }
.layouts .sheet { padding-left: 2px; color: #222; }
.layouts .edge { width: 6px; }

.rightbar { width: 18px; flex: none; display: flex; flex-direction: column; align-items: center; background: #f2f2f2; overflow: hidden; }
.rightbar .barend { width: 100%; height: 5px; }
.rightbar button { flex: 1; min-height: 0; }

.status { display: flex; height: 17px; flex: none; background: linear-gradient(#aaa, #8c8c8c); border-top: 1px solid #c9c9c9; color: #222; }
.ratio { width: 60px; gap: 4px; background: linear-gradient(#c4c4c4, #999); }
.ratio .tri { border-left-width: 3px; border-right-width: 3px; border-top-width: 4px; }
.status .mono { font-size: 7px; }
.coords { width: 91px; padding-left: 3px; line-height: 17px; border: 1px solid #888; border-width: 0 1px; white-space: nowrap; }
.toggles { display: flex; }
.toggles button { width: 15px; border: 1px solid #777; border-left-color: #ddd; background: linear-gradient(#ccc, #aaa); }
.toggles .on { background: linear-gradient(#d6f2fb, #86cadf); }
.toggles .wide { width: 20px; font-weight: bold; }
.toggles .anno { width: 36px; gap: 2px; }
.sep { width: 12px; background: #7c7c7c; display: flex; align-items: center; justify-content: center; }
.gap { width: 4px; }
.corner { width: 10px; height: 10px; align-self: flex-end; }
.mark { position: absolute; right: 11px; bottom: 17px; display: flex; align-items: center; gap: 9px; color: #888; opacity: .6; font-size: 17px; line-height: 18px; pointer-events: none; }
.mark b { font-family: "DejaVu Sans", sans-serif; font-size: 20px; }
```
